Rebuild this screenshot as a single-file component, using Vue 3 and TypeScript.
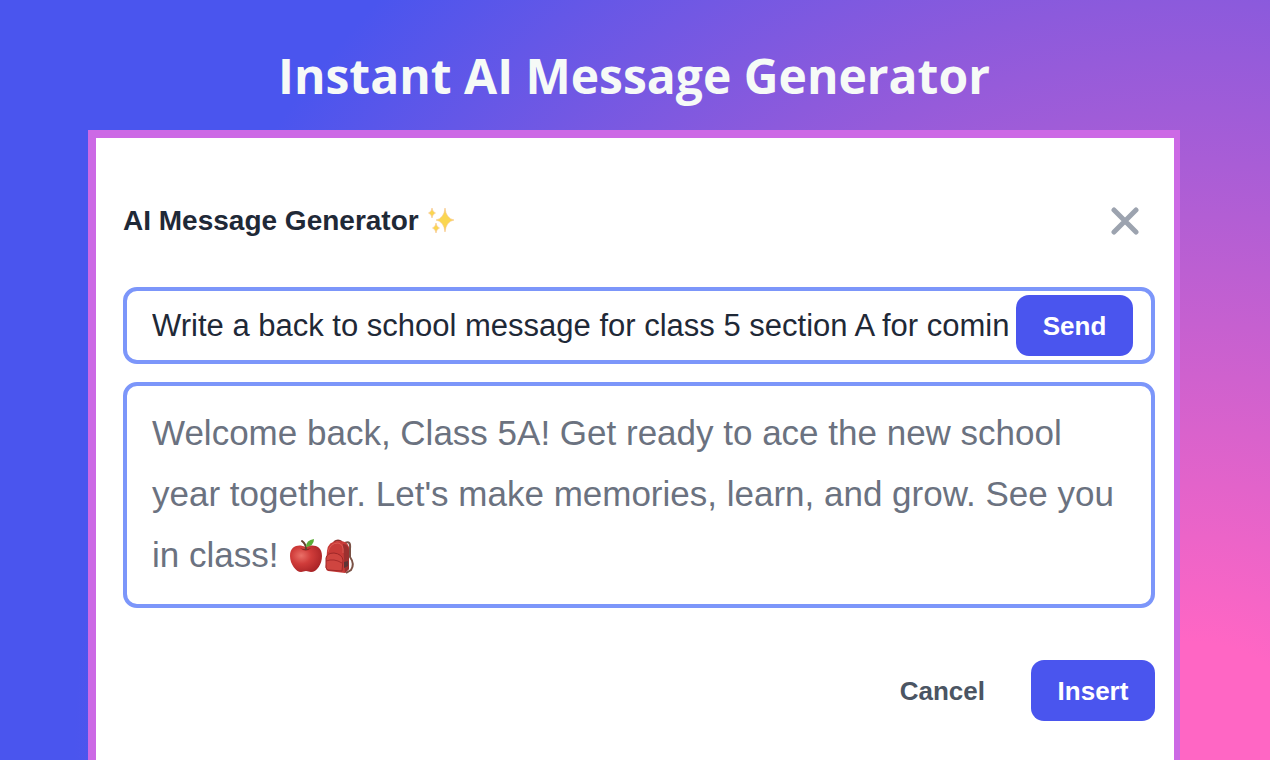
<script setup lang="ts">
import { ref } from 'vue'

const prompt = ref('Write a back to school message for class 5 section A for coming academic year')
</script>

<template>
  <main class="page">
    <h1>Instant AI Message Generator</h1>
    <section class="dialog" aria-labelledby="dialog-title">
      <header class="head">
        <h2 id="dialog-title">AI Message Generator</h2>
        <svg class="sparkles" viewBox="0 0 28 28" aria-hidden="true">
          <g fill="#fad650" stroke="#f6c389" stroke-width="0.6">
            <path d="M17 1Q18 11.500 26 13Q18 14.500 17 25Q16 14.500 8 13Q16 11.500 17 1Z" />
            <path d="M4 1Q4.500 5 7.500 6Q4.500 7 4 11Q3.500 7 0.500 6Q3.500 5 4 1Z" />
            <path d="M8 16Q8.500 20 11.500 21Q8.500 22 8 26Q7.500 22 4.500 21Q7.500 20 8 16Z" />
          </g>
        </svg>
        <button class="close" type="button" aria-label="Close">
          <svg viewBox="0 0 28 28" aria-hidden="true"><path d="M3 3L25 25M25 3L3 25" /></svg>
        </button>
      </header>
      <form class="prompt" @submit.prevent>
        <input v-model="prompt" type="text" aria-label="Message prompt" />
        <button class="primary send" type="submit">Send</button>
      </form>
      <div class="result">
        Welcome back, Class 5A! Get ready to ace the new school year together. Let's make memories, learn, and grow. See you in class!
        <span class="pictures">
          <svg viewBox="0 0 34 36" role="img" aria-label="Apple">
            <defs>
              <radialGradient id="apple" cx="0.35" cy="0.38" r="0.7">
                <stop offset="0" stop-color="#ea7068" />
                <stop offset="0.45" stop-color="#d03c3a" />
                <stop offset="1" stop-color="#a82326" />
              </radialGradient>
            </defs>
            <path d="M17 7C12 4 2 5 2 16C2 24 8 32 13 32C15 32 16 31 18 31C20 31 21 32 23 32C29 32 34 24 34 16C34 5 24 4 18 7Z" fill="url(#apple)" />
            <path d="M12 8Q17 10 23 8Q18 13 12 8Z" fill="#8e2521" />
            <path d="M18 9Q18 4 14 1" fill="none" stroke="#65422f" stroke-width="2" stroke-linecap="round" />
            <path d="M18 7Q18 0 26 -1Q26 6 18 7Z" fill="#5cad39" />
          </svg>
          <svg viewBox="0 0 34 36" role="img" aria-label="Backpack">
            <g transform="translate(1 -1)">
              <path d="M22 4Q28 1 27 10V18Q32 25 28 31L23 34" fill="none" stroke="#7b5246" stroke-width="2" />
              <path d="M11 3Q15 0 19 3" fill="none" stroke="#8b302c" stroke-width="2" />
              <path d="M4 12Q5 2 15 2Q24 1 26 8V30L22 34L5 32Q2 31 3 26Z" fill="#c83b38" />
              <path d="M20 5Q26 5 26 13V30L22 34Z" fill="#9c302f" />
              <path d="M5 13Q7 4 15 4Q21 5 20 14" fill="none" stroke="#dc5a52" />
              <path d="M3 19Q4 14 11 14Q19 15 20 21L19 32L5 31Q2 30 3 25Z" fill="#cf4540" stroke="#9e2828" />
              <path d="M3 22Q11 19 19 24" fill="none" stroke="#a72a2a" />
              <path d="M21 23L25 22V27L21 29Z" fill="#5d3436" />
            </g>
          </svg>
        </span>
      </div>
      <footer class="actions">
        <button class="cancel" type="button">Cancel</button>
        <button class="primary insert" type="button">Insert</button>
      </footer>
    </section>
  </main>
</template>

<style>
body { margin: 0; }
</style>

<style scoped>
* { box-sizing: border-box; }
.page {
  display: flex;
  flex-direction: column;
  min-height: 100vh;
  padding: 0 90px 0 88px;
  background: radial-gradient(circle at 94% 101%, #ff66c4 125px, #8c5adc 765px, #4a55ee 1120px);
  font-family: "Liberation Sans", Arial, sans-serif;
}
h1 {
  margin: 0;
  height: 130px;
  padding-top: 42px;
  color: #f6faf7;
  font: 700 48px/68px "Open Sans", sans-serif;
  text-align: center;
  white-space: nowrap;
}
.dialog {
  flex: 1;
  padding: 57px 19px 38px 27px;
  border: 8px solid #cc69e5;
  border-right-width: 6px;
  border-bottom: 0;
  background: #fff;
}
.head { display: flex; align-items: center; height: 52px; }
h2 { margin: 0; color: #1f2937; font-size: 28px; line-height: 36px; }
.sparkles { width: 28px; height: 28px; margin-left: 9px; }
button { font: 700 26px/32px "Liberation Sans", Arial, sans-serif; border: 0; }
.close { margin-left: auto; margin-right: 16px; padding: 0; background: none; width: 28px; height: 28px; }
.close svg { display: block; width: 28px; height: 28px; fill: none; stroke: #9ca3af; stroke-width: 5; stroke-linecap: round; }
.prompt {
  display: flex;
  align-items: center;
  height: 77px;
  margin-top: 40px;
  padding: 0 18px 0 25px;
  border: 4px solid #7c96fa;
  border-radius: 14px;
}
input {
  flex: 1;
  min-width: 0;
  height: 48px;
  margin-right: 6px;
  padding: 0;
  border: 0;
  outline: 0;
  background: transparent;
  color: #1f2937;
  font: 31px/40px "Liberation Sans", Arial, sans-serif;
}
.primary { height: 61px; border-radius: 13px; background: #4a55ee; color: #fff; }
.send { width: 117px; padding: 0; }
.result {
  min-height: 226px;
  margin-top: 18px;
  padding: 16px 25px;
  border: 4px solid #7c96fa;
  border-radius: 14px;
  color: #6b7280;
  font-size: 35px;
  line-height: 61px;
}
.pictures { display: inline-flex; vertical-align: middle; }
.pictures svg { width: 34px; height: 36px; overflow: visible; }
.actions { display: flex; justify-content: flex-end; gap: 20px; margin-top: 52px; }
.cancel { padding: 0 26px; background: none; color: #4b5563; }
.insert { width: 124px; padding: 0; }
</style>
